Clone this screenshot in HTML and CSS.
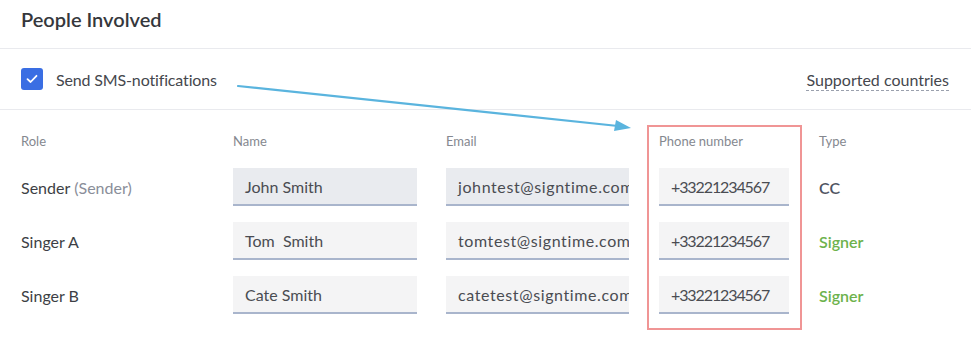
FILE: index.html
```html
<!DOCTYPE html>
<html>
<head>
<meta charset="utf-8">
<link rel="stylesheet" href="styles.css">
</head>
<body>
<div class="page">
  <div class="title-bar"><h1 class="title">People Involved</h1></div>
  <div class="sms-row">
    <label class="sms-check">
      <span class="checkbox"><svg width="12" height="10" viewBox="0 0 12 10"><path d="M1.5 5.2 L4.6 8 L10.5 1.8" fill="none" stroke="#fff" stroke-width="1.8" stroke-linecap="round" stroke-linejoin="round"/></svg></span>
      <span class="sms-label">Send SMS-notifications</span>
    </label>
    <span class="supported">Supported countries</span>
  </div>
  <div class="table">
    <div class="th">Role</div>
    <div class="th">Name</div>
    <div class="th">Email</div>
    <div class="th">Phone number</div>
    <div class="th">Type</div>

    <div class="td role">Sender <span class="muted">(Sender)</span></div>
    <div class="td"><div class="field name dark">John Smith</div></div>
    <div class="td"><div class="field email dark">johntest@signtime.com</div></div>
    <div class="td"><div class="field phone">+33221234567</div></div>
    <div class="td type cc">CC</div>

    <div class="td role">Singer A</div>
    <div class="td"><div class="field name">Tom&nbsp; Smith</div></div>
    <div class="td"><div class="field email">tomtest@signtime.com</div></div>
    <div class="td"><div class="field phone">+33221234567</div></div>
    <div class="td type signer">Signer</div>

    <div class="td role">Singer B</div>
    <div class="td"><div class="field name">Cate Smith</div></div>
    <div class="td"><div class="field email">catetest@signtime.com</div></div>
    <div class="td"><div class="field phone">+33221234567</div></div>
    <div class="td type signer">Signer</div>
  </div>
  <div class="highlight"></div>
  <svg class="arrow" width="971" height="354" viewBox="0 0 971 354">
    <line x1="238" y1="86" x2="618" y2="126" stroke="#5ab4de" stroke-width="2.2" stroke-linecap="round"/>
    <path d="M631 128 L616 120 L614 131 Z" fill="#5ab4de"/>
  </svg>
</div>
</body>
</html>
```

FILE: styles.css
```css
* { box-sizing: border-box; }
html, body { margin: 0; padding: 0; background: #fff; }
body {
  font-family: "Lato", "Open Sans", sans-serif;
  color: #3d3f45;
  width: 971px;
  height: 354px;
  overflow: hidden;
}
.page { position: relative; width: 971px; height: 354px; }
.title-bar {
  height: 49px;
  padding: 5px 21px 0;
  border-bottom: 1px solid #e9eaee;
}
.title {
  margin: 0;
  font-size: 20px;
  font-weight: 600;
  color: #35373c;
  line-height: 28px;
}
.sms-row {
  height: 61px;
  display: flex;
  align-items: center;
  justify-content: space-between;
  padding: 0 22px 0 21px;
  border-bottom: 1px solid #e9eaee;
}
.sms-check { display: flex; align-items: center; gap: 13px; }
.checkbox {
  width: 22px; height: 22px;
  border-radius: 3px;
  background: #3a6ee3;
  display: flex; align-items: center; justify-content: center;
}
.sms-label { font-size: 16px; color: #45474d; letter-spacing: -0.15px; }
.supported {
  font-size: 16px;
  color: #45474d;
  border-bottom: 1px dashed #9aa0ad;
  line-height: 20px;
  margin-top: 2px;
}
.table {
  display: grid;
  grid-template-columns: 212px 213px 213px 160px 1fr;
  grid-auto-rows: 54px;
  grid-template-rows: 50px;
  padding: 0 0 0 21px;
}
.th {
  font-size: 13px;
  color: #85888f;
  padding-top: 23px;
}
.td { display: flex; align-items: center; height: 54px; }
.role { font-size: 16px; color: #3d3f45; }
.muted { color: #8a8e99; margin-left: 4px; }
.field {
  height: 38px;
  background: #f4f4f5;
  border-bottom: 2px solid #a9b5cc;
  display: flex; align-items: center;
  padding: 0 12px;
  font-size: 16px;
  color: #4a4c52;
  white-space: nowrap;
  overflow: hidden;
}
.field.dark { background: #e9ebef; }
.name { width: 184px; }
.email { width: 183px; padding-right: 0; letter-spacing: 0.6px; }
.phone { width: 130px; letter-spacing: -1.1px; }
.type { font-size: 16px; font-weight: 600; }
.cc { color: #4f5462; }
.signer { color: #6db24c; }
.highlight {
  position: absolute;
  left: 647px; top: 125px;
  width: 155px; height: 205px;
  border: 2px solid #f09595;
}
.arrow { position: absolute; left: 0; top: 0; pointer-events: none; }
```
